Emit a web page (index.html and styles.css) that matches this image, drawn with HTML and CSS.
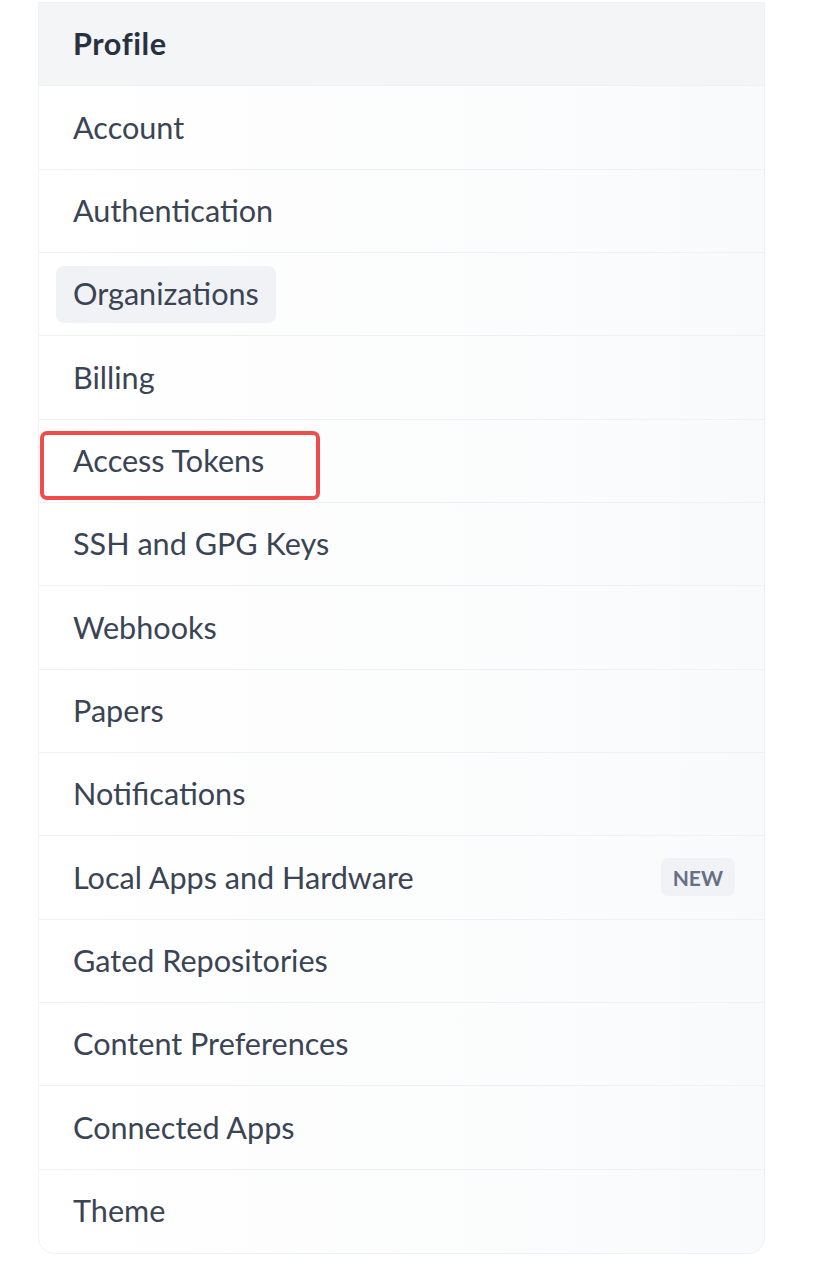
FILE: index.html
```html
<!DOCTYPE html>
<html lang="en">
<head>
<meta charset="utf-8">
<title>Settings menu</title>
<link rel="stylesheet" href="styles.css">
</head>
<body>
<nav class="menu">
  <div class="row row-head"><span class="link link-bold">Profile</span></div>
  <div class="row"><span class="link">Account</span></div>
  <div class="row"><span class="link">Authentication</span></div>
  <div class="row"><span class="link link-active">Organizations</span></div>
  <div class="row"><span class="link">Billing</span></div>
  <div class="row row-marked"><span class="link">Access Tokens</span><span class="mark"></span></div>
  <div class="row"><span class="link">SSH and GPG Keys</span></div>
  <div class="row"><span class="link">Webhooks</span></div>
  <div class="row"><span class="link">Papers</span></div>
  <div class="row"><span class="link">Notifications</span></div>
  <div class="row row-badge"><span class="link">Local Apps and Hardware</span><span class="badge">NEW</span></div>
  <div class="row"><span class="link">Gated Repositories</span></div>
  <div class="row"><span class="link">Content Preferences</span></div>
  <div class="row"><span class="link">Connected Apps</span></div>
  <div class="row row-last"><span class="link">Theme</span></div>
</nav>
</body>
</html>
```

FILE: styles.css
```css
html, body {
  margin: 0;
  padding: 0;
  background: #ffffff;
}

body {
  font-family: Lato, "Liberation Sans", sans-serif;
  color: #3b4454;
}

.menu {
  margin: 2px 0 0 38px;
  width: 727px;
  box-sizing: border-box;
  border: 1px solid #f0f1f4;
  border-radius: 0 0 16px 16px;
  background: linear-gradient(to right, #ffffff, #f9fafb);
  display: flex;
  flex-direction: column;
  overflow: hidden;
}

.row {
  position: relative;
  height: 83.33px;
  box-sizing: border-box;
  border-bottom: 1px solid #f0f1f4;
  display: flex;
  align-items: center;
  padding: 0 29px 0 17px;
}

.row-last {
  border-bottom: none;
}

.row-head {
  background: #f4f5f7;
}

.link {
  display: inline-flex;
  align-items: center;
  height: 57px;
  padding: 1px 17px 0;
  box-sizing: border-box;
  border-radius: 8px;
  font-size: 30.6px;
  line-height: 1;
  white-space: nowrap;
}

.link-bold {
  font-weight: 700;
  color: #283142;
  letter-spacing: 0.6px;
}

.link-active {
  background: #f1f2f5;
}

.row-badge {
  justify-content: space-between;
}

.badge {
  display: inline-flex;
  align-items: center;
  justify-content: center;
  height: 38px;
  padding: 0 12px;
  border-radius: 7px;
  background: #f1f2f5;
  color: #667085;
  font-size: 21px;
  font-weight: 700;
}

.mark {
  position: absolute;
  left: 1px;
  top: 11px;
  width: 280px;
  height: 69px;
  box-sizing: border-box;
  border: 4px solid #f04c4c;
  border-radius: 7px;
  pointer-events: none;
}
```
